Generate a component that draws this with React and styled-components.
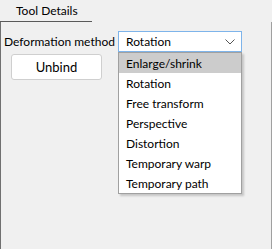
import React from "react";
import styled, { createGlobalStyle } from "styled-components";

const Global = createGlobalStyle`
  html, body { margin: 0; padding: 0; background: #f0f0f0; }
  #root { width: 272px; height: 249px; }
  * { box-sizing: border-box; }
`;

const Panel = styled.div`
  width: 272px;
  height: 249px;
  display: flex;
  flex-direction: column;
  background: #f0f0f0;
  font-family: Lato, "Noto Sans", sans-serif;
  font-size: 12px;
  color: #000;
`;

const TabBar = styled.div`
  height: 22px;
  display: flex;
  align-items: flex-end;
`;

const Tab = styled.div`
  width: 92px;
  height: 22px;
  padding-left: 16px;
  padding-bottom: 1px;
  display: flex;
  align-items: center;
  border-bottom: 1px solid #5a5a5a;
`;

const Body = styled.div`
  flex: 1;
  border-left: 1px solid #707070;
  border-right: 1px solid #a0a0a0;
  padding: 9px 0 0 3px;
  display: flex;
  flex-direction: column;
`;

const Row = styled.div`
  display: flex;
  align-items: center;
`;

const Label = styled.span`
  width: 114px;
  white-space: nowrap;
`;

const ComboWrap = styled.div`
  position: relative;
`;

const Combo = styled.div`
  width: 124px;
  height: 21px;
  border: 1px solid #7eb4ea;
  background: #fff;
  display: flex;
  align-items: center;
  justify-content: space-between;
  padding: 0 6px 0 7px;
`;

const List = styled.ul`
  position: absolute;
  left: 0;
  top: 21px;
  width: 124px;
  margin: 0;
  padding: 0;
  list-style: none;
  background: #fff;
  border: 1px solid #a0a0a0;
  box-shadow: 2px 2px 2px rgba(0, 0, 0, 0.18);
  z-index: 2;
`;

const Item = styled.li`
  height: 20px;
  display: flex;
  align-items: center;
  padding-left: 7px;
  background: ${(p) => (p.$active ? "#cccccc" : "transparent")};
`;

const Button = styled.button`
  margin: 2px 0 0 7px;
  width: 91px;
  height: 26px;
  background: #fff;
  border: 1px solid #cfcfcf;
  border-radius: 3px;
  font: inherit;
  font-size: 13px;
  color: #000;
  padding: 0;
`;

const items = [
  "Enlarge/shrink",
  "Rotation",
  "Free transform",
  "Perspective",
  "Distortion",
  "Temporary warp",
  "Temporary path",
];

export default function App() {
  return (
    <>
      <Global />
      <Panel>
        <TabBar>
          <Tab>Tool Details</Tab>
        </TabBar>
        <Body>
          <Row>
            <Label>Deformation method</Label>
            <ComboWrap>
              <Combo>
                <span>Rotation</span>
                <svg width="10" height="6" viewBox="0 0 10 6">
                  <path d="M0.5 0.5 L5 5 L9.5 0.5" fill="none" stroke="#555" strokeWidth="1" />
                </svg>
              </Combo>
              <List>
                {items.map((t, i) => (
                  <Item key={t} $active={i === 0}>{t}</Item>
                ))}
              </List>
            </ComboWrap>
          </Row>
          <Button>Unbind</Button>
        </Body>
      </Panel>
    </>
  );
}
